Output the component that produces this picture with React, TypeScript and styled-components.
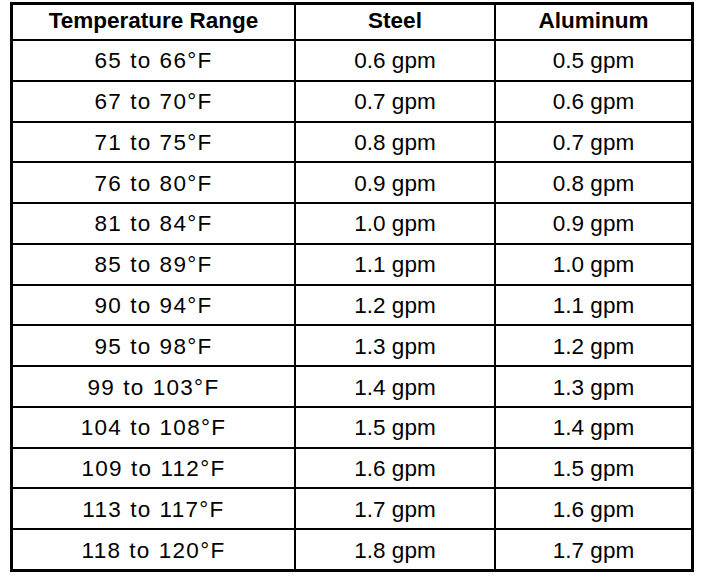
import React from "react";
import styled, { createGlobalStyle } from "styled-components";

const GlobalStyle = createGlobalStyle`
  html, body {
    margin: 0;
    padding: 0;
    background: #fff;
  }
  body {
    font-family: "Liberation Sans", Arial, sans-serif;
    color: #000;
  }
`;

const Page = styled.div`
  padding: 2px 0 0 10px;
`;

const Grid = styled.div`
  display: grid;
  grid-template-columns: 281px 198px 1fr;
  grid-template-rows: 34px repeat(13, 1fr);
  gap: 2px;
  width: 684px;
  height: 570px;
  box-sizing: border-box;
  border: 3px solid #000;
  background: #000;
`;

const Cell = styled.div<{ $head?: boolean; $wide?: boolean }>`
  display: flex;
  align-items: center;
  justify-content: center;
  background: #fff;
  font-size: 22.5px;
  font-weight: ${(p) => (p.$head ? 700 : 400)};
  letter-spacing: ${(p) => (p.$wide ? "1.3px" : "0")};
  word-spacing: ${(p) => (p.$wide ? "0.5px" : "0")};
  padding-bottom: ${(p) => (p.$head ? "3px" : "0")};
  padding-top: ${(p) => (p.$head ? "0" : "2px")};
  white-space: nowrap;
`;

const rows: [string, string, string][] = [
  ["65 to 66°F", "0.6 gpm", "0.5 gpm"],
  ["67 to 70°F", "0.7 gpm", "0.6 gpm"],
  ["71 to 75°F", "0.8 gpm", "0.7 gpm"],
  ["76 to 80°F", "0.9 gpm", "0.8 gpm"],
  ["81 to 84°F", "1.0 gpm", "0.9 gpm"],
  ["85 to 89°F", "1.1 gpm", "1.0 gpm"],
  ["90 to 94°F", "1.2 gpm", "1.1 gpm"],
  ["95 to 98°F", "1.3 gpm", "1.2 gpm"],
  ["99 to 103°F", "1.4 gpm", "1.3 gpm"],
  ["104 to 108°F", "1.5 gpm", "1.4 gpm"],
  ["109 to 112°F", "1.6 gpm", "1.5 gpm"],
  ["113 to 117°F", "1.7 gpm", "1.6 gpm"],
  ["118 to 120°F", "1.8 gpm", "1.7 gpm"],
];

const App: React.FC = () => {
  return (
    <>
      <GlobalStyle />
      <Page>
        <Grid>
          <Cell $head>Temperature Range</Cell>
          <Cell $head>Steel</Cell>
          <Cell $head>Aluminum</Cell>
          {rows.map(([range, steel, alu]) => (
            <React.Fragment key={range}>
              <Cell $wide>{range}</Cell>
              <Cell>{steel}</Cell>
              <Cell>{alu}</Cell>
            </React.Fragment>
          ))}
        </Grid>
      </Page>
    </>
  );
};

export default App;
